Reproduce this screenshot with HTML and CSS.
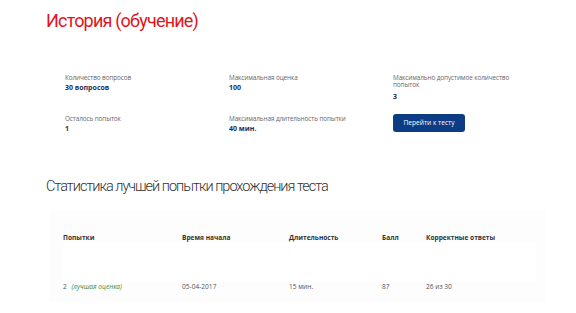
FILE: index.html
```html
<!DOCTYPE html>
<html lang="ru">
<head>
<meta charset="utf-8">
<title>История (обучение)</title>
<link rel="stylesheet" href="styles.css">
</head>
<body>
<div class="page">
  <h1 class="title">История (обучение)</h1>
  <div class="info">
    <div class="cell">
      <div class="label">Количество вопросов</div>
      <div class="value">30 вопросов</div>
    </div>
    <div class="cell">
      <div class="label">Максимальная оценка</div>
      <div class="value">100</div>
    </div>
    <div class="cell">
      <div class="label">Максимально допустимое количество попыток</div>
      <div class="value value-tall">3</div>
    </div>
    <div class="cell">
      <div class="label">Осталось попыток</div>
      <div class="value">1</div>
    </div>
    <div class="cell">
      <div class="label">Максимальная длительность попытки</div>
      <div class="value">40 мин.</div>
    </div>
    <div class="cell">
      <button class="btn" type="button">Перейти к тесту</button>
    </div>
  </div>
  <h2 class="subtitle">Статистика лучшей попытки прохождения теста</h2>
  <div class="stats">
    <table class="table">
      <thead>
        <tr>
          <th class="c1">Попытки</th>
          <th class="c2">Время начала</th>
          <th class="c3">Длительность</th>
          <th class="c4">Балл</th>
          <th class="c5">Корректные ответы</th>
        </tr>
      </thead>
      <tbody>
        <tr class="spacer"><td colspan="5"></td></tr>
        <tr>
          <td>2 <span class="best">(лучшая оценка)</span></td>
          <td>05-04-2017</td>
          <td>15 мин.</td>
          <td>87</td>
          <td>26 из 30</td>
        </tr>
      </tbody>
    </table>
  </div>
</div>
</body>
</html>
```

FILE: styles.css
```css
html, body {
  margin: 0;
  padding: 0;
  background: #ffffff;
}

body {
  font-family: "Open Sans", "Noto Sans", sans-serif;
  color: #333;
}

.page {
  padding: 9px 0 0 46px;
}

.title {
  margin: 0;
  font-family: Roboto, "Noto Sans", sans-serif;
  font-weight: 400;
  font-size: 18px;
  line-height: 24px;
  letter-spacing: -0.8px;
  color: #e3141e;
}

.info {
  display: grid;
  grid-template-columns: 120px 120px 140px;
  column-gap: 44px;
  row-gap: 13px;
  margin: 41px 0 0 19px;
  align-items: start;
}

.cell {
  display: flex;
  flex-direction: column;
  align-items: flex-start;
  max-width: 120px;
}

.label {
  font-size: 6.4px;
  line-height: 7px;
  color: #666;
  letter-spacing: -0.1px;
}

.value {
  font-size: 7px;
  line-height: 10px;
  font-weight: 700;
  color: #1f2e52;
  margin-top: 2px;
}

.value-tall {
  margin-top: 4px;
}

.btn {
  margin-top: -1px;
  width: 72px;
  height: 18px;
  padding: 0;
  border: none;
  border-radius: 3px;
  background: #0c3c83;
  color: #fff;
  font-family: "Open Sans", "Noto Sans", sans-serif;
  font-size: 6.6px;
  line-height: 18px;
}

.subtitle {
  margin: 43px 0 0 0;
  font-family: Roboto, "Noto Sans", sans-serif;
  font-weight: 300;
  font-size: 14.5px;
  line-height: 20px;
  letter-spacing: -1px;
  color: #333;
}

.stats {
  margin: 14px 30px 0 4px;
  background: #fdfdfd;
  padding: 22px 0 10px 13px;
}

.table {
  border-collapse: collapse;
  font-size: 6.6px;
}

.table th {
  text-align: left;
  font-weight: 700;
  color: #333;
  line-height: 10px;
  padding: 0;
}

.table td {
  padding: 0;
  line-height: 10px;
  color: #555;
}

.spacer td {
  height: 39px;
  background: #fff;
}

.c1 { width: 119px; }
.c2 { width: 107px; }
.c3 { width: 93px; }
.c4 { width: 44px; }
.c5 { width: 110px; }

.best {
  font-style: italic;
  color: #3c8c3c;
  margin-left: 3px;
}
```
